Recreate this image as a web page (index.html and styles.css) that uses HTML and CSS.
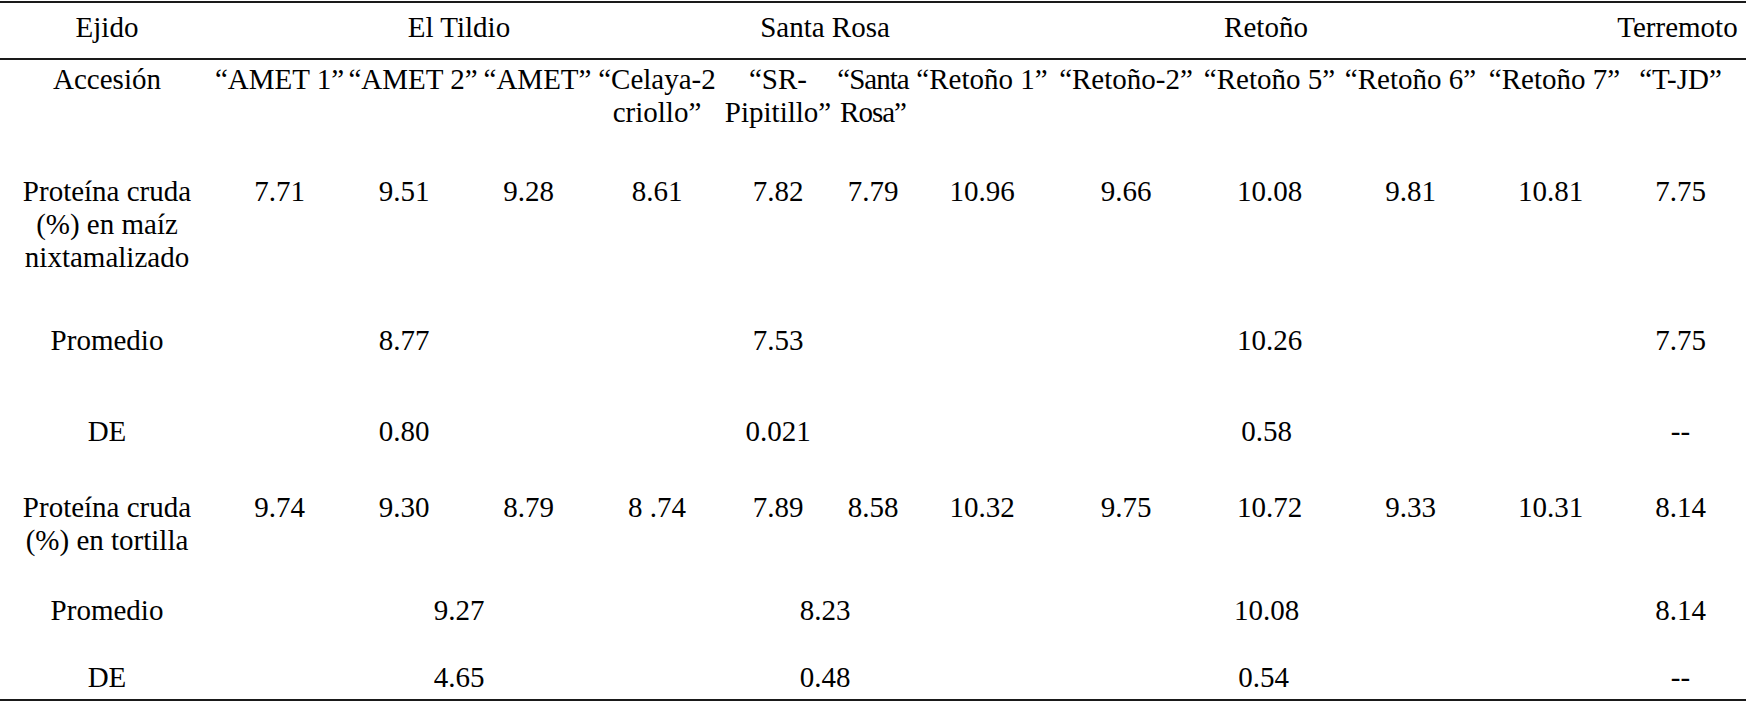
FILE: index.html
```html
<!DOCTYPE html>
<html lang="es">
<head>
<meta charset="utf-8">
<title>Proteína cruda</title>
<link rel="stylesheet" href="styles.css">
</head>
<body>
<div class="wrap">
<table class="tbl">
  <colgroup>
    <col class="c0"><col class="c1"><col class="c2"><col class="c3"><col class="c4"><col class="c5"><col class="c6"><col class="c7"><col class="c8"><col class="c9"><col class="c10"><col class="c11"><col class="c12">
  </colgroup>
  <tr class="r0">
    <td>Ejido</td>
    <td colspan="4" class="g-tildio">El Tildio</td>
    <td colspan="2" class="g-srosa">Santa Rosa</td>
    <td colspan="5" class="g-retono">Retoño</td>
    <td class="last"><div class="cc">Terremoto</div></td>
  </tr>
  <tr class="r1">
    <td>Accesión</td>
    <td>“AMET 1”</td>
    <td>“AMET 2”</td>
    <td>“AMET”</td>
    <td>“Celaya-2<br>criollo”</td>
    <td>“SR-<br>Pipitillo”</td>
    <td class="santa">“Santa<br>Rosa”</td>
    <td>“Retoño 1”</td>
    <td>“Retoño-2”</td>
    <td>“Retoño 5”</td>
    <td>“Retoño 6”</td>
    <td>“Retoño 7”</td>
    <td class="last">“T-JD”</td>
  </tr>
  <tr class="r2">
    <td>Proteína cruda<br>(%) en maíz<br>nixtamalizado</td>
    <td>7.71</td>
    <td class="sh">9.51</td>
    <td class="sh">9.28</td>
    <td>8.61</td>
    <td>7.82</td>
    <td>7.79</td>
    <td>10.96</td>
    <td>9.66</td>
    <td>10.08</td>
    <td>9.81</td>
    <td class="sh4">10.81</td>
    <td class="last">7.75</td>
  </tr>
  <tr class="r3">
    <td>Promedio</td>
    <td></td>
    <td class="sh">8.77</td>
    <td></td>
    <td></td>
    <td>7.53</td>
    <td></td>
    <td></td>
    <td></td>
    <td>10.26</td>
    <td></td>
    <td></td>
    <td class="last">7.75</td>
  </tr>
  <tr class="r4">
    <td>DE</td>
    <td></td>
    <td class="sh">0.80</td>
    <td></td>
    <td></td>
    <td>0.021</td>
    <td></td>
    <td></td>
    <td></td>
    <td class="sh2">0.58</td>
    <td></td>
    <td></td>
    <td class="last">--</td>
  </tr>
  <tr class="r5">
    <td>Proteína cruda<br>(%) en tortilla</td>
    <td>9.74</td>
    <td class="sh">9.30</td>
    <td class="sh">8.79</td>
    <td>8 .74</td>
    <td>7.89</td>
    <td>8.58</td>
    <td>10.32</td>
    <td>9.75</td>
    <td>10.72</td>
    <td>9.33</td>
    <td class="sh4">10.31</td>
    <td class="last">8.14</td>
  </tr>
  <tr class="r6">
    <td>Promedio</td>
    <td colspan="4" class="g-tildio">9.27</td>
    <td colspan="2" class="g-srosa">8.23</td>
    <td></td>
    <td></td>
    <td class="sh2">10.08</td>
    <td></td>
    <td></td>
    <td class="last">8.14</td>
  </tr>
  <tr class="r7">
    <td>DE</td>
    <td colspan="4" class="g-tildio">4.65</td>
    <td colspan="2" class="g-srosa">0.48</td>
    <td></td>
    <td></td>
    <td class="sh6">0.54</td>
    <td></td>
    <td></td>
    <td class="last">--</td>
  </tr>
</table>
</div>
</body>
</html>
```

FILE: styles.css
```css
html, body {
  margin: 0;
  padding: 0;
  background: #ffffff;
}

.wrap {
  padding-top: 1px;
}

.tbl {
  width: 1746px;
  table-layout: fixed;
  border-collapse: separate;
  border-spacing: 0;
  font-family: "Liberation Serif", "Times New Roman", serif;
  font-size: 29px;
  line-height: 33px;
  color: #000;
}

.c0 { width: 214px; }
.c1 { width: 131px; }
.c2 { width: 136px; }
.c3 { width: 113px; }
.c4 { width: 126px; }
.c5 { width: 116px; }
.c6 { width: 74px; }
.c7 { width: 144px; }
.c8 { width: 144px; }
.c9 { width: 143px; }
.c10 { width: 139px; }
.c11 { width: 149px; }
.c12 { width: 117px; }

.tbl td {
  padding: 0;
  text-align: center;
  vertical-align: top;
  white-space: nowrap;
}

.r0 { height: 59px; }
.r0 td {
  border-top: 2px solid #1a1a1a;
  border-bottom: 2px solid #1a1a1a;
  padding-top: 8px;
}

.r1 { height: 115px; }
.r1 td { padding-top: 3px; }

.r2 { height: 149px; }
.r3 { height: 91px; }
.r4 { height: 76px; }
.r5 { height: 103px; }
.r6 { height: 67px; }
.r7 { height: 40px; }
.r7 td {
  border-bottom: 2px solid #1a1a1a;
}

.tbl td.g-tildio { padding-right: 16px; }
.tbl td.g-srosa { padding-left: 20px; }
.tbl td.g-retono { padding-right: 7px; }
.tbl td.last { padding-right: 14px; }
.tbl .r0 td.last { padding-right: 20px; }

.tbl td.sh { padding-right: 18px; }
.tbl td.sh4 { padding-right: 8px; }
.tbl td.sh2 { padding-right: 6px; }
.tbl td.sh6 { padding-right: 12px; }

.cc {
  display: flex;
  justify-content: center;
}

.tbl td.santa {
  text-align: center;
  letter-spacing: -1px;
}
```
